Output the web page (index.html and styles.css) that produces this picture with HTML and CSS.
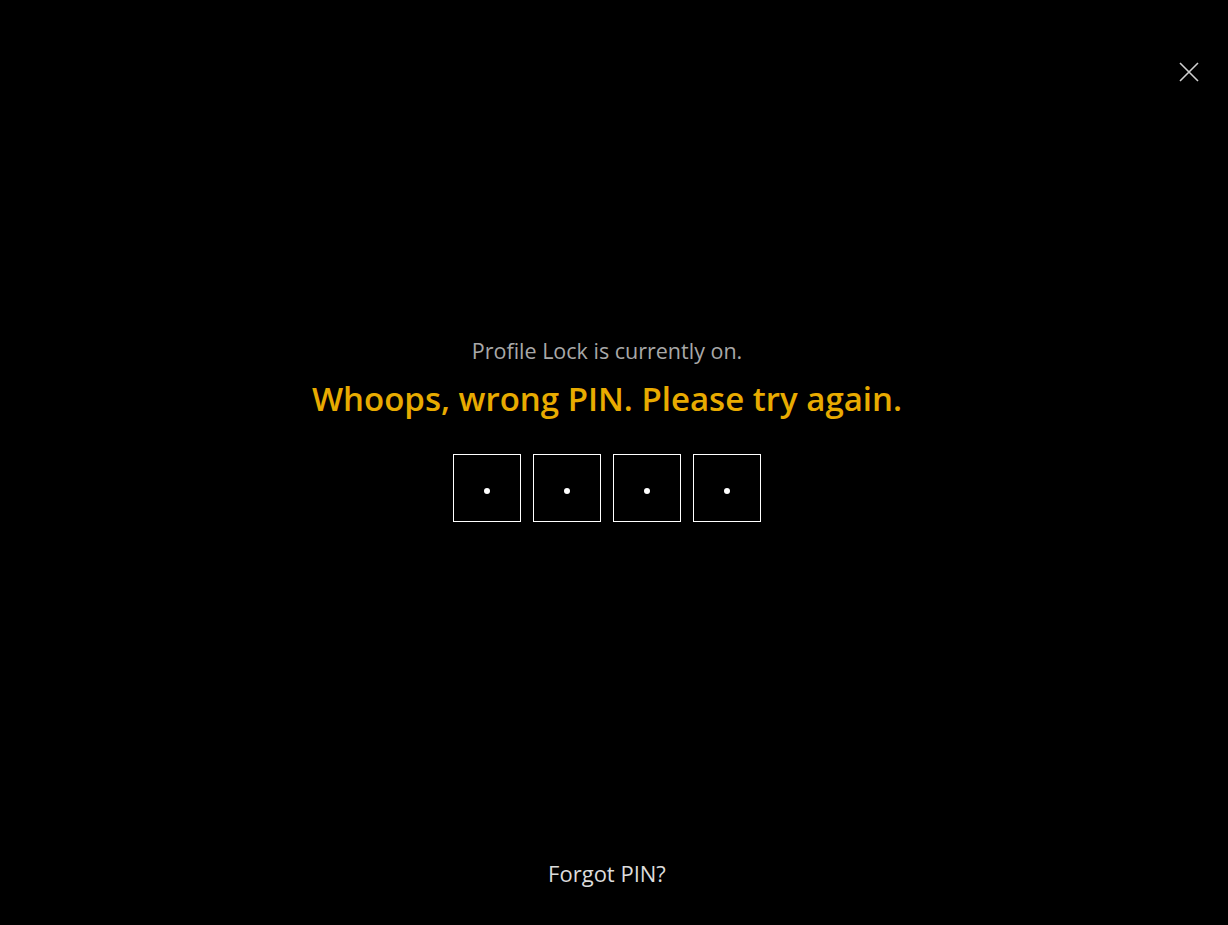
FILE: index.html
```html
<!DOCTYPE html>
<html lang="en">
<head>
<meta charset="utf-8">
<title>Profile Lock</title>
<link rel="stylesheet" href="styles.css">
</head>
<body>
<div class="page">
  <header class="topbar">
    <button class="close" aria-label="Close">
      <svg width="20" height="20" viewBox="0 0 20 20"><path d="M1 1L19 19M19 1L1 19" stroke="#d0d0d0" stroke-width="1.6" fill="none"/></svg>
    </button>
  </header>
  <main class="main">
    <p class="subtitle">Profile Lock is currently on.</p>
    <h1 class="title">Whoops, wrong PIN. Please try again.</h1>
    <div class="pins">
      <div class="pin"><span class="dot"></span></div>
      <div class="pin"><span class="dot"></span></div>
      <div class="pin"><span class="dot"></span></div>
      <div class="pin"><span class="dot"></span></div>
    </div>
  </main>
  <footer class="footer">
    <a class="forgot" href="#">Forgot PIN?</a>
  </footer>
</div>
</body>
</html>
```
FILE: styles.css
```css
html, body {
  margin: 0;
  padding: 0;
  background: #000;
  height: 100%;
}
body {
  font-family: "Open Sans", "Noto Sans", "Liberation Sans", sans-serif;
}
.page {
  height: 925px;
  display: flex;
  flex-direction: column;
}
.topbar {
  display: flex;
  justify-content: flex-end;
  padding: 62px 29px 0 0;
  height: 20px;
}
.close {
  background: none;
  border: 0;
  padding: 0;
  width: 20px;
  height: 20px;
  cursor: pointer;
}
.close svg { display: block; }
.main {
  flex: 1;
  display: flex;
  flex-direction: column;
  align-items: center;
  padding: 253.5px 14px 0 0;
}
.subtitle {
  margin: 0;
  color: #a8a8a8;
  font-size: 21.5px;
  line-height: 29px;
}
.title {
  margin: 12.5px 0 0;
  color: #e8ab00;
  font-size: 33px;
  font-weight: 600;
  line-height: 44px;
}
.pins {
  display: flex;
  gap: 12px;
  margin-top: 33px;
}
.pin {
  width: 66px;
  height: 66px;
  border: 1px solid #fff;
  display: flex;
  align-items: center;
  justify-content: center;
}
.dot {
  width: 6px;
  height: 6px;
  border-radius: 50%;
  background: #fff;
  margin-top: 6px;
}
.footer {
  display: flex;
  justify-content: center;
  padding: 0 14px 37.5px 0;
}
.forgot {
  color: #dcdcdc;
  font-size: 22px;
  line-height: 30px;
  text-decoration: none;
}
```
